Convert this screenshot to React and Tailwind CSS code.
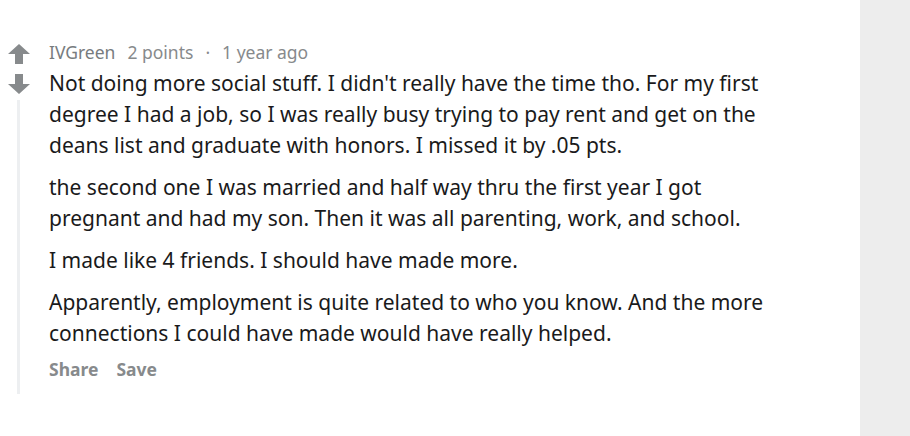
export default function App() {
  return (
    <div className="flex h-[436px] w-[910px] bg-white">
      <div className="flex flex-1 pt-[40px] font-['Noto_Sans',sans-serif]">
        <div className="flex w-[49px] shrink-0 flex-col items-center">
          <svg width="22" height="20" viewBox="0 0 22 20" className="ml-[-12px] mt-[4px]">
            <path d="M11 0 L22 10 L15 10 L15 20 L7 20 L7 10 L0 10 Z" fill="#878a8c" />
          </svg>
          <svg width="22" height="20" viewBox="0 0 22 20" className="ml-[-12px] mt-[10px]">
            <path d="M7 0 L15 0 L15 10 L22 10 L11 20 L0 10 L7 10 Z" fill="#878a8c" />
          </svg>
          <div className="ml-[-12px] mt-[6px] h-[294px] w-[3px] bg-[#edeff1]" />
        </div>
        <div className="w-[740px]">
          <div className="flex items-center gap-[12px] text-[17.5px] leading-[24px] text-[#878a8c]">
            <span className="text-[#787c7e]">IVGreen</span>
            <span>2 points</span>
            <span>·</span>
            <span>1 year ago</span>
          </div>
          <div className="mt-[4px] text-[21px] leading-[31px] text-[#1a1a1b]">
            <p>
              Not doing more social stuff. I didn't really have the time tho. For my first degree I had a job, so I was really busy trying to pay rent and get on the deans list and graduate with honors. I missed it by .05 pts.
            </p>
            <p className="mt-[11px]">
              the second one I was married and half way thru the first year I got pregnant and had my son. Then it was all parenting, work, and school.
            </p>
            <p className="mt-[11px]">I made like 4 friends. I should have made more.</p>
            <p className="mt-[11px]">
              Apparently, employment is quite related to who you know. And the more connections I could have made would have really helped.
            </p>
          </div>
          <div className="mt-[7px] flex gap-[18px] text-[17.5px] font-bold text-[#878a8c]">
            <span>Share</span>
            <span>Save</span>
          </div>
        </div>
      </div>
      <div className="w-[50px] bg-[#ededed]" />
    </div>
  );
}
